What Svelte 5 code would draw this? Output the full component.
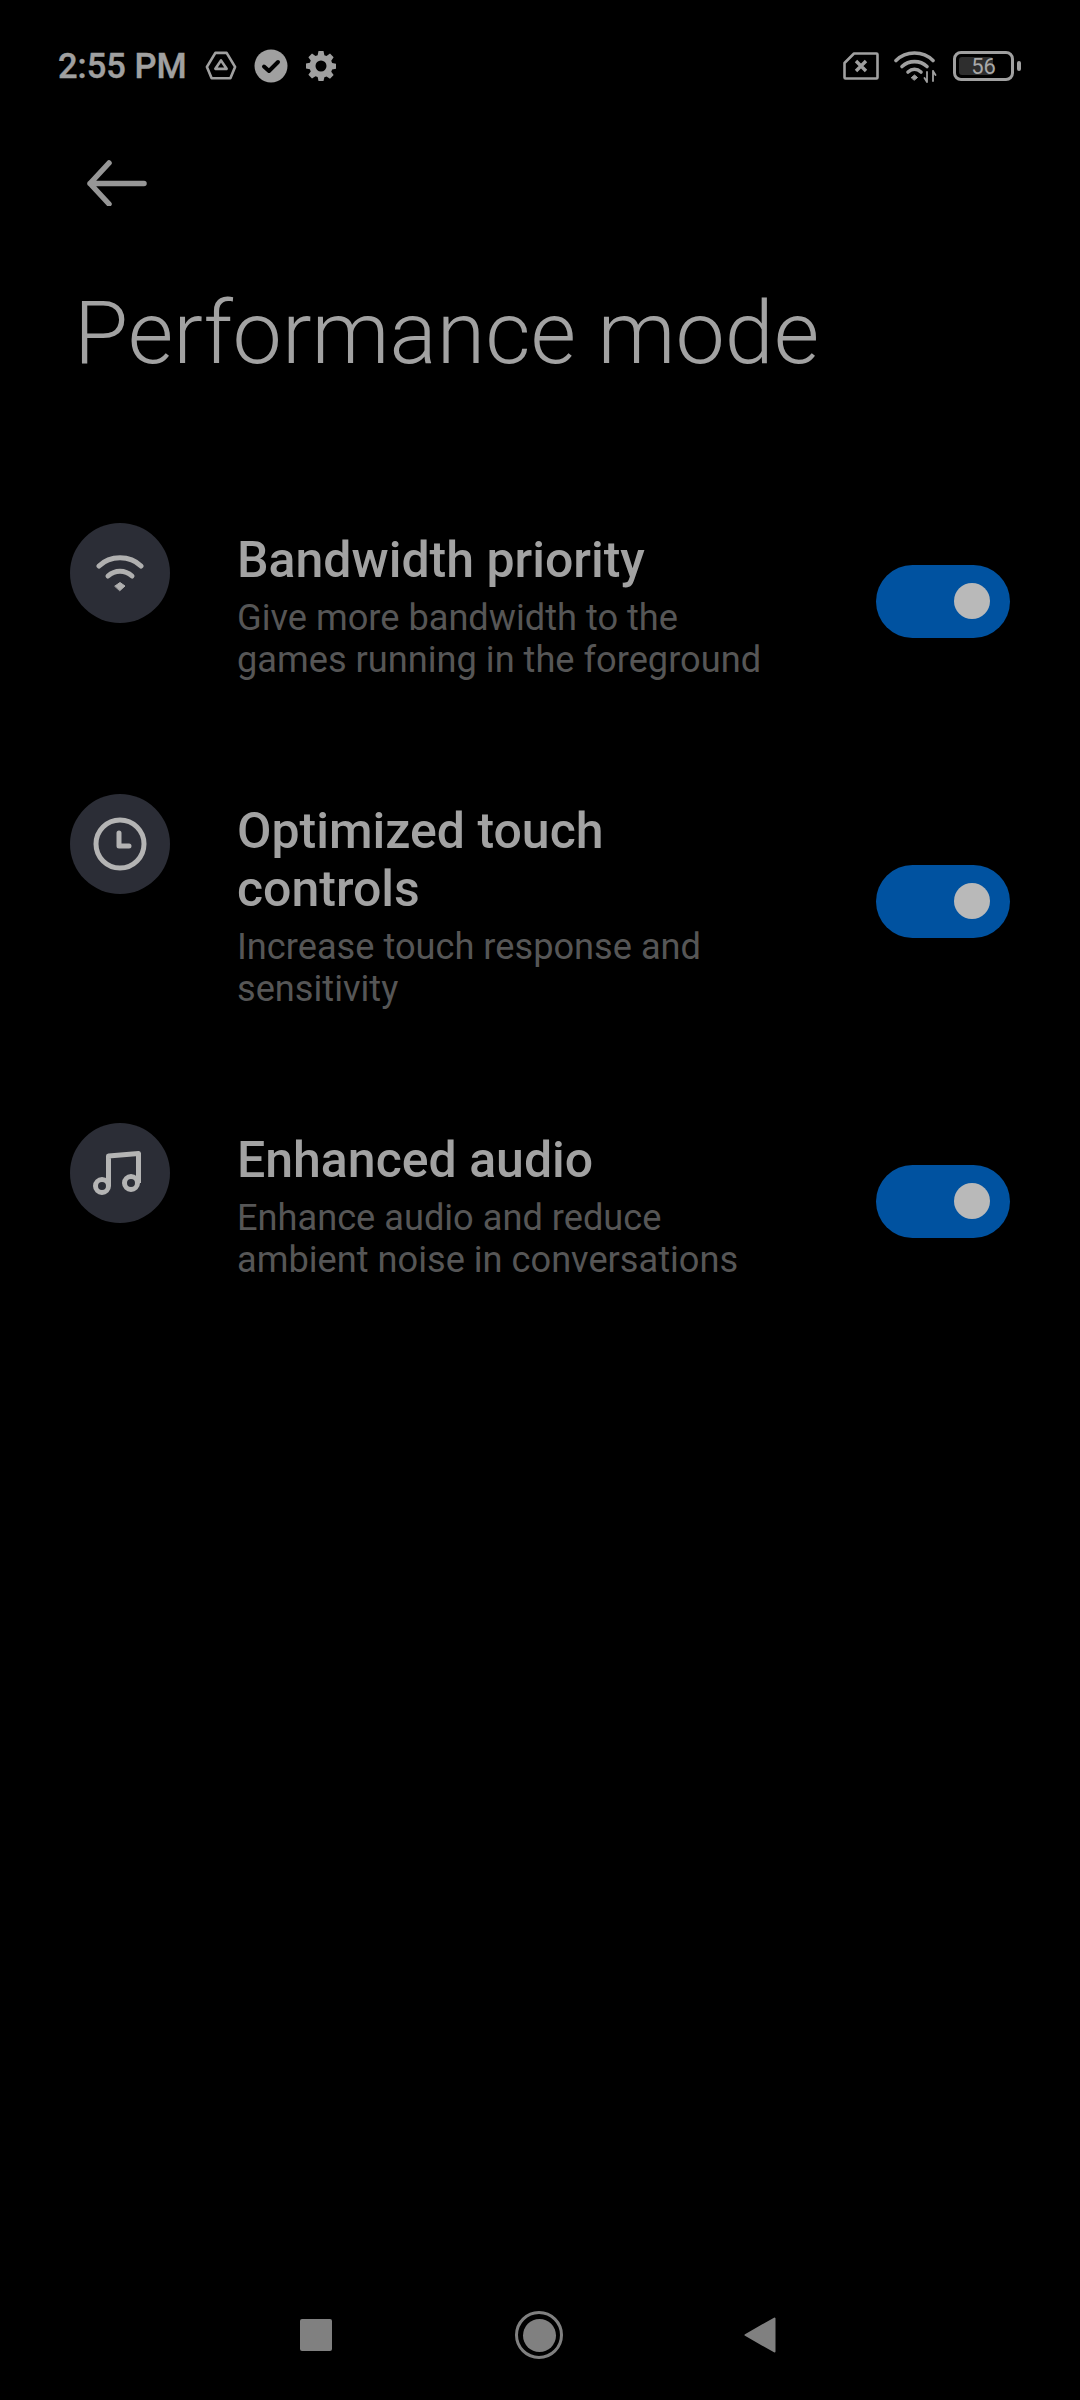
<script>
  const rows = [
    {
      id: "wifi",
      title: "Bandwidth priority",
      desc: "Give more bandwidth to the games running in the foreground",
    },
    {
      id: "clock",
      title: "Optimized touch controls",
      desc: "Increase touch response and sensitivity",
    },
    {
      id: "music",
      title: "Enhanced audio",
      desc: "Enhance audio and reduce ambient noise in conversations",
    },
  ];
</script>

<div class="page">
  <div class="status">
    <span class="time">2:55 PM</span>
    <svg class="ic-drive" width="32" height="30" viewBox="0 0 34 32" fill="none" stroke="#a0a0a0" stroke-width="2.800" stroke-linejoin="round">
      <path d="M11 2h12l9 15-5 12H7L2 17z" />
      <path d="M17 10l6 9H11z" />
    </svg>
    <svg class="ic-check" width="34" height="34" viewBox="0 0 34 34">
      <circle cx="17" cy="17" r="16.500" fill="#a0a0a0" />
      <path d="M10 17.500l5 4.500 9-9" fill="none" stroke="#000" stroke-width="4" stroke-linecap="round" stroke-linejoin="round" />
    </svg>
    <svg class="ic-gear" width="30" height="30" viewBox="0 0 24 24">
      <path fill="#a0a0a0" fill-rule="evenodd" d="M10 0h4l.7 3.300 1.700.7L19.200 2l2.900 3-1.900 2.800.7 1.700 3.100.6v4l-3.100.7-.7 1.700 1.900 2.700-2.900 3-2.800-1.900-1.700.7L14 24h-4l-.7-3.200-1.700-.7L4.800 22l-2.900-3 1.900-2.700-.7-1.700L0 13.900v-4l3.100-.6.7-1.700L1.900 5l2.900-3 2.800 2 1.700-.7zM12 7.600a4.400 4.400 0 1 0 0 8.800 4.400 4.400 0 0 0 0-8.800z" />
    </svg>

    <div class="status-right">
      <svg width="36" height="28" viewBox="0 0 36 28" fill="none" stroke="#a0a0a0" stroke-width="2.600" stroke-linejoin="round">
        <path d="M11 1.500h22.500a1 1 0 0 1 1 1v23a1 1 0 0 1-1 1H2.500a1 1 0 0 1-1-1V11z" />
        <path d="M13 9l10 10M23 9L13 19" stroke-width="3.400" />
      </svg>
      <svg class="ic-signal" width="44" height="32" viewBox="0 0 44 32" fill="none" stroke="#a0a0a0" stroke-linecap="round">
        <path d="M2 9.500C12-.5 29-.5 39 9.500" stroke-width="3.600" />
        <path d="M8 15.500c7-6.500 18-6.500 25 0" stroke-width="3.600" />
        <path d="M14 21c4-3.500 9-3.500 13 0" stroke-width="3.600" />
        <path d="M17.500 26.500l3-2.500 3 2.500-3 2.500z" fill="#a0a0a0" stroke-width="1" />
        <path d="M33 21v10M30.500 27l2.500 4M39 20v10M39 20l2.500 4" stroke-width="1.800" />
      </svg>
      <div class="battery">
        <div class="battery-body">
          <div class="battery-level"></div>
          <span class="battery-text">56</span>
        </div>
        <div class="battery-nub"></div>
      </div>
    </div>
  </div>

  <div class="back">
    <svg width="60" height="46" viewBox="0 0 60 46" fill="none" stroke="#969696" stroke-width="5.500" stroke-linecap="round" stroke-linejoin="round">
      <path d="M57 23.500H3M22 3L3 23.500 22 44" />
    </svg>
  </div>

  <h1>Performance mode</h1>

  <div class="list">
    {#each rows as row}
      <div class="row">
        <div class="circle">
          {#if row.id === "wifi"}
            <svg width="48" height="40" viewBox="0 0 48 40" fill="none" stroke="#b0b0b0" stroke-width="5" stroke-linecap="round">
              <path d="M3 13C14 2 34 2 45 13" />
              <path d="M12 23c7-6.500 17-6.500 24 0" />
              <path d="M19 33l5-3.500 5 3.500-5 4.500z" fill="#b0b0b0" stroke-width="1" stroke-linejoin="round" />
            </svg>
          {:else if row.id === "clock"}
            <svg width="54" height="54" viewBox="0 0 54 54" fill="none" stroke="#b4b4b4" stroke-width="5" stroke-linecap="round" stroke-linejoin="round">
              <circle cx="27" cy="27" r="24" />
              <path d="M26 16v13h10" />
            </svg>
          {:else}
            <svg class="ic-music" width="48" height="44" viewBox="0 0 48 44" fill="none" stroke="#b4b4b4" stroke-width="5" stroke-linejoin="round">
              <circle cx="9" cy="35" r="6.500" />
              <circle cx="38" cy="32" r="6.500" />
              <path d="M15.500 35V5L45.500 2.500V32" />
            </svg>
          {/if}
        </div>
        <div class="text">
          <div class="title">{row.title}</div>
          <div class="desc">{row.desc}</div>
        </div>
        <div class="toggle">
          <div class="knob"></div>
        </div>
      </div>
    {/each}
  </div>

  <div class="nav">
    <div class="nav-square"></div>
    <div class="nav-home"><div class="nav-dot"></div></div>
    <svg width="32" height="36" viewBox="0 0 32 36">
      <path d="M30.500 1.500v33L1.500 18z" fill="#808080" stroke="#808080" stroke-width="2" stroke-linejoin="round" />
    </svg>
  </div>
</div>

<style>
  :global(body) {
    margin: 0;
    background: #000;
  }

  .page {
    width: 1080px;
    height: 2400px;
    background: #000;
    display: flex;
    flex-direction: column;
    font-family: Roboto, sans-serif;
    overflow: hidden;
  }

  .status {
    display: flex;
    align-items: center;
    height: 34px;
    margin-top: 49px;
    padding: 0 59px 0 58px;
  }

  .time {
    font-size: 34.5px;
    font-weight: 500;
    color: #a0a0a0;
    margin-right: 18px;
    -webkit-text-stroke: 0.4px #a0a0a0;
  }

  .ic-check {
    margin-left: 17px;
  }

  .ic-gear {
    margin-left: 18px;
  }

  .status-right {
    margin-left: auto;
    display: flex;
    align-items: center;
    gap: 15px;
  }

  .ic-signal {
    margin-top: 2px;
  }

  .battery {
    display: flex;
    align-items: center;
    gap: 3px;
  }

  .battery-body {
    position: relative;
    width: 61px;
    height: 30px;
    box-sizing: border-box;
    border: 3.5px solid #a0a0a0;
    border-radius: 8px;
    display: flex;
    align-items: center;
    justify-content: center;
    overflow: hidden;
  }

  .battery-level {
    position: absolute;
    left: 3px;
    top: 3px;
    bottom: 3px;
    width: 34px;
    background: #2e2e2e;
    border-radius: 3px;
  }

  .battery-text {
    position: relative;
    font-size: 22px;
    color: #a8a8a8;
  }

  .battery-nub {
    width: 4px;
    height: 10px;
    background: #a0a0a0;
    border-radius: 2px;
  }

  .back {
    display: flex;
    margin: 77px 0 0 87px;
  }

  h1 {
    margin: 71px 0 0 74px;
    font-size: 88px;
    line-height: 112px;
    font-weight: 300;
    color: #a2a2a2;
  }

  .list {
    display: flex;
    flex-direction: column;
    gap: 119px;
    margin-top: 140px;
    padding: 0 70px;
  }

  .row {
    display: flex;
    align-items: center;
  }

  .circle {
    align-self: flex-start;
    flex: none;
    width: 100px;
    height: 100px;
    margin-top: -6px;
    border-radius: 50%;
    background: #2b2d36;
    display: flex;
    align-items: center;
    justify-content: center;
  }

  .ic-music {
    margin-right: 6px;
  }

  .text {
    width: 540px;
    margin-left: 67px;
    padding-top: 2px;
  }

  .title {
    font-size: 50px;
    line-height: 58px;
    font-weight: 500;
    color: #a2a2a2;
  }

  .desc {
    margin-top: 8px;
    font-size: 36.2px;
    line-height: 42px;
    color: #565656;
  }

  .toggle {
    flex: none;
    margin-left: auto;
    margin-top: -8px;
    box-sizing: border-box;
    width: 134px;
    height: 73px;
    border-radius: 37px;
    background: #0052a0;
    display: flex;
    align-items: center;
    justify-content: flex-end;
    padding-right: 20px;
  }

  .knob {
    width: 36px;
    height: 36px;
    border-radius: 50%;
    background: #b9b9b9;
  }

  .nav {
    margin-top: auto;
    height: 36px;
    margin-bottom: 47px;
    padding: 0 304px 0 300px;
    display: flex;
    align-items: center;
    justify-content: space-between;
  }

  .nav-square {
    width: 32px;
    height: 32px;
    background: #808080;
    border-radius: 2px;
  }

  .nav-home {
    box-sizing: border-box;
    width: 48px;
    height: 48px;
    margin-left: 2px;
    border: 3px solid #808080;
    border-radius: 50%;
    display: flex;
    align-items: center;
    justify-content: center;
  }

  .nav-dot {
    width: 33px;
    height: 33px;
    background: #808080;
    border-radius: 50%;
  }
</style>
